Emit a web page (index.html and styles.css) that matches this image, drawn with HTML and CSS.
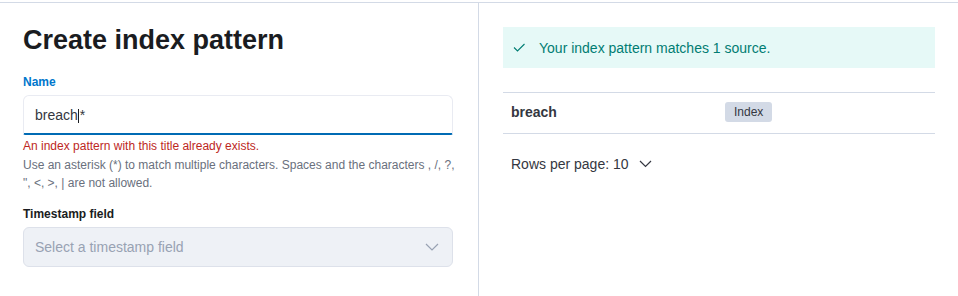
FILE: index.html
```html
<!DOCTYPE html>
<html lang="en">
<head>
    <meta charset="UTF-8">
    <meta name="viewport" content="width=device-width, initial-scale=1.0">
    <title>Create index pattern</title>
    <link rel="stylesheet" href="styles.css">
</head>
<body>
    <div class="page">
        <!-- Form column -->
        <section class="panel panel-form">
            <h1 class="title">Create index pattern</h1>

            <div class="form-row">
                <label class="label label-active" for="name">Name</label>
                <div class="input input-focused" id="name">breach<span class="caret"></span>*</div>
                <div class="error">An index pattern with this title already exists.</div>
                <div class="help">Use an asterisk (*) to match multiple characters. Spaces and the characters , /, ?, ", &lt;, &gt;, | are not allowed.</div>
            </div>

            <div class="form-row">
                <label class="label">Timestamp field</label>
                <div class="select">
                    <span class="placeholder">Select a timestamp field</span>
                    <svg class="chevron" width="14" height="8" viewBox="0 0 14 8"><path d="M1 1l6 6 6-6" fill="none" stroke="currentColor" stroke-width="1.2"/></svg>
                </div>
            </div>
        </section>

        <!-- Preview column -->
        <section class="panel panel-preview">
            <div class="callout">
                <svg class="check" width="12" height="9" viewBox="0 0 12 9"><path d="M1 4.5l3.5 3.5 7-7" fill="none" stroke="currentColor" stroke-width="1.1"/></svg>
                <span>Your index pattern matches 1 source.</span>
            </div>

            <div class="sources">
                <div class="source-row">
                    <div class="source-name">breach</div>
                    <div class="source-type"><span class="badge">Index</span></div>
                </div>
            </div>

            <div class="pagination">
                <span>Rows per page: 10</span>
                <svg class="chevron" width="13" height="8" viewBox="0 0 13 8"><path d="M1 1l5.5 5.5 5.5-5.5" fill="none" stroke="currentColor" stroke-width="1.2"/></svg>
            </div>
        </section>
    </div>
</body>
</html>
```

FILE: styles.css
```css
:root {
    --text-color: #343741;
    --title-color: #1a1c21;
    --border-color: #d3dae6;
    --primary-color: #006bb4;
    --label-active: #0077cc;
    --danger-color: #bd271e;
    --subdued-color: #69707d;
    --placeholder-color: #98a2b3;
    --success-bg: #e6f9f7;
    --success-text: #017d73;
}

* {
    margin: 0;
    padding: 0;
    box-sizing: border-box;
}

body {
    font-family: 'Liberation Sans', Arial, sans-serif;
    color: var(--text-color);
    background: #ffffff;
    padding-top: 2px;
}

.page {
    display: grid;
    grid-template-columns: 478px 1fr;
    border-top: 1px solid var(--border-color);
    min-height: 294px;
}

/* Колонка формы */
.panel-form {
    padding: 21px 25px 0 23px;
}

.title {
    font-size: 27px;
    line-height: 32px;
    font-weight: 700;
    color: var(--title-color);
    margin-bottom: 17px;
}

.form-row + .form-row {
    margin-top: 13px;
}

.label {
    display: block;
    font-size: 12px;
    line-height: 18px;
    font-weight: 700;
    color: var(--title-color);
    margin-bottom: 4px;
}

.label-active {
    color: var(--label-active);
}

.input {
    height: 40px;
    display: flex;
    align-items: center;
    padding: 0 11px;
    font-size: 14px;
    color: var(--text-color);
    background: #ffffff;
    border: 1px solid #e9ebf2;
    border-bottom: 2px solid var(--primary-color);
    border-radius: 6px 6px 2px 2px;
}

.caret {
    display: inline-block;
    width: 1px;
    height: 14px;
    margin: 2px 1px 0 0;
    background: var(--title-color);
}

.error {
    margin-top: 2px;
    font-size: 12px;
    line-height: 18px;
    color: var(--danger-color);
}

.help {
    margin-top: 1px;
    margin-right: -8px;
    font-size: 12px;
    line-height: 18px;
    color: var(--subdued-color);
}

.select {
    height: 40px;
    display: flex;
    align-items: center;
    justify-content: space-between;
    padding: 0 13px 0 11px;
    font-size: 14px;
    background: #eef1f6;
    border: 1px solid #dde1ea;
    border-radius: 6px;
}

.placeholder {
    color: var(--placeholder-color);
}

.select .chevron {
    color: var(--placeholder-color);
}

/* Колонка предпросмотра */
.panel-preview {
    border-left: 1px solid var(--border-color);
    padding: 24px 23px 0 24px;
}

.callout {
    display: flex;
    align-items: center;
    gap: 14px;
    height: 41px;
    padding: 0 10px;
    background: var(--success-bg);
    color: var(--success-text);
    font-size: 14px;
}

.sources {
    margin-top: 24px;
    border-top: 1px solid var(--border-color);
}

.source-row {
    display: grid;
    grid-template-columns: 214px 1fr;
    align-items: center;
    height: 41px;
    padding-bottom: 3px;
    border-bottom: 1px solid var(--border-color);
}

.source-name {
    padding-left: 8px;
    font-size: 14px;
    font-weight: 700;
    color: var(--text-color);
}

.source-type {
    padding-left: 8px;
}

.badge {
    display: inline-block;
    padding: 0 9px;
    height: 20px;
    line-height: 20px;
    font-size: 12px;
    color: var(--text-color);
    background: var(--border-color);
    border-radius: 3px;
}

.pagination {
    display: flex;
    align-items: center;
    gap: 10px;
    margin-top: 20px;
    padding-left: 8px;
    font-size: 14px;
    line-height: 20px;
    color: var(--text-color);
}
```
